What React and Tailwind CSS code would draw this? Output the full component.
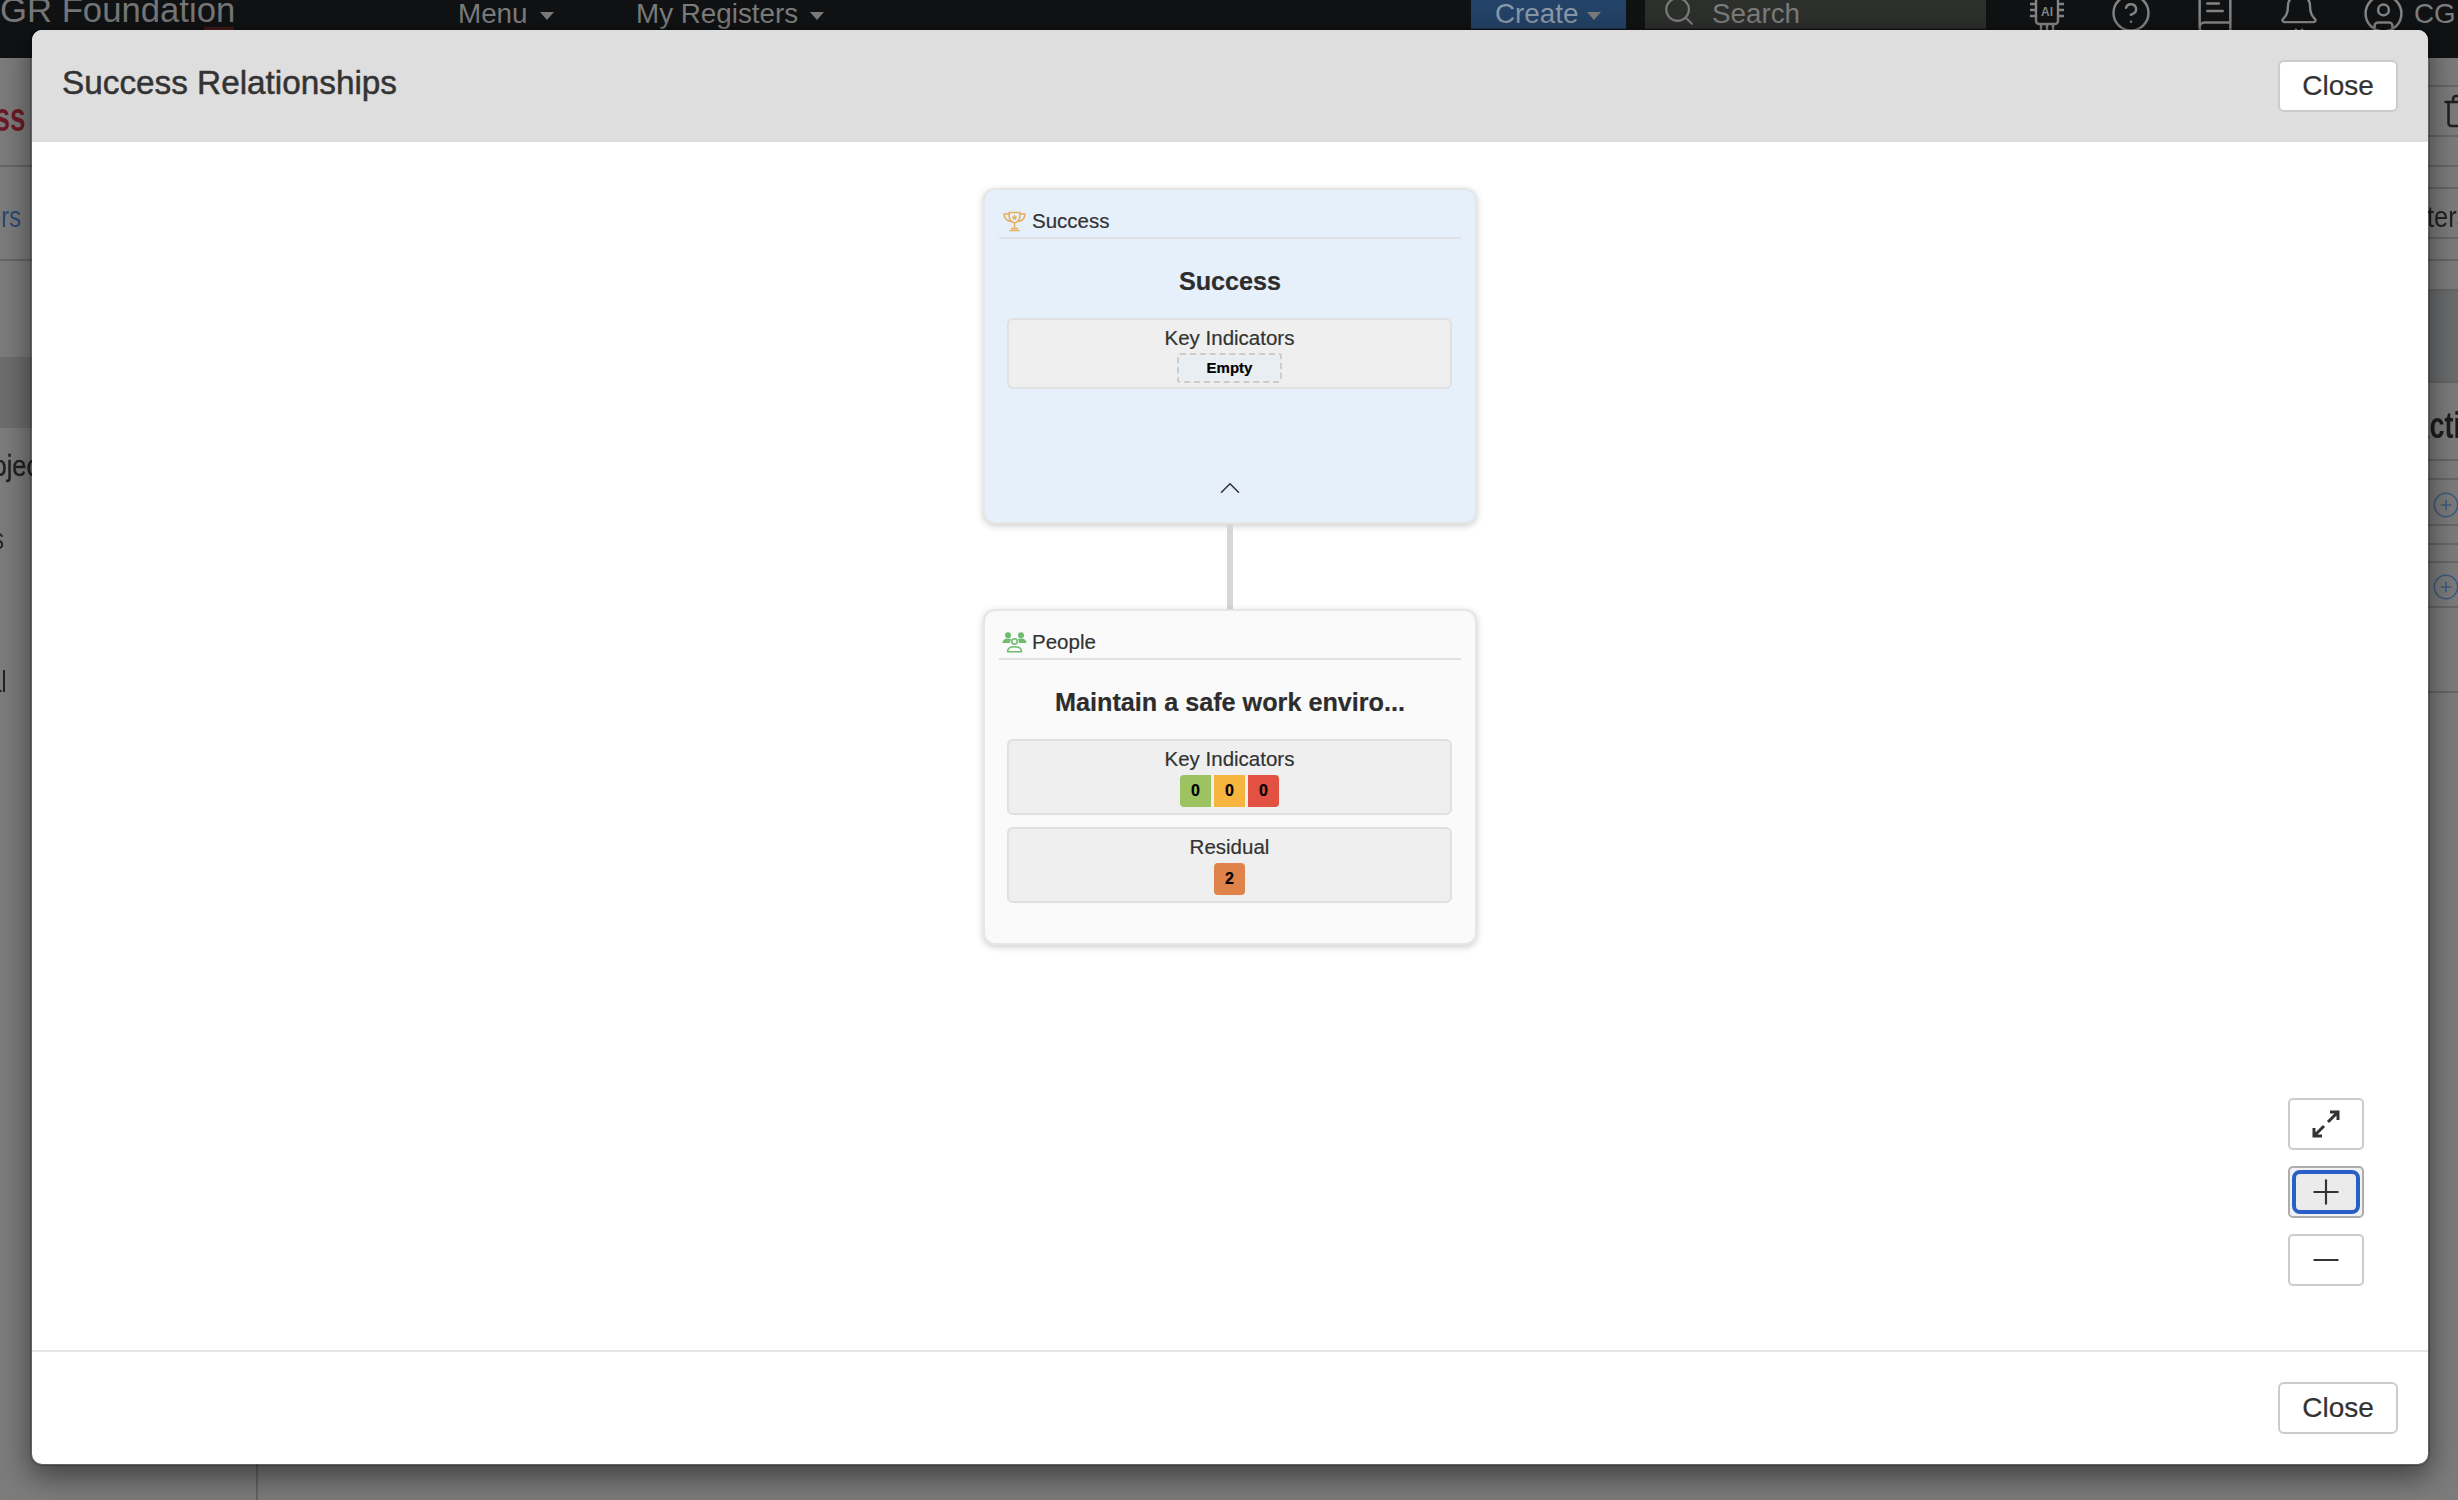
import React from 'react';
import { Search, CircleHelp, BookText, Bell, CircleUser, Trash, CirclePlus, ChevronUp, Plus, Minus } from 'lucide-react';

const leftRows = [
  { h: 'h-[109px]', text: 'Success', cls: 'text-[40px] font-bold text-[#6e1a26] -ml-[88px] mt-[10px] scale-x-70', line: true },
  { h: 'h-[94px]', text: 'Filters', cls: 'text-[30px] text-[#2b4a70] -ml-[44px] mt-[6px] scale-x-80', line: true },
  { h: 'h-[96px]' },
  { h: 'h-[71px] bg-[#6e6e6e]' },
  { h: 'h-[74px]', text: 'Projects', cls: 'text-[30px] text-[#222] -ml-[33px] scale-x-85 [-webkit-text-stroke:0.4px]' },
  { h: 'h-[56px]', text: 'Risks', cls: 'text-[30px] text-[#222] -ml-[51px] mt-[16px] scale-x-75' },
  { h: 'h-[86px]' },
  { h: 'h-[72px]', text: 'Residual', cls: 'text-[30px] text-[#222] -ml-[81px] mt-[3px] scale-x-75' },
];

const rightRows = [
  { h: 'h-[29px]' },
  { h: 'h-[50px]', trash: true },
  { h: 'h-[30px]' },
  { h: 'h-[22px]' },
  { h: 'h-[50px]', text: 'Filters', cls: 'text-[30px] text-[#222] mt-[6px] scale-x-85' },
  { h: 'h-[22px]' },
  { h: 'h-[30px]' },
  { h: 'h-[92px] bg-[#6a6c6e]' },
  { h: 'h-[78px]', text: 'Actions', cls: 'text-[36px] font-bold text-[#1c1c1c] ml-[10px] mt-[10px] scale-x-75' },
  { h: 'h-[19px]' },
  { h: 'h-[46px]', plus: true },
  { h: 'h-[19px]' },
  { h: 'h-[18px]' },
  { h: 'h-[45px]', plus: true },
  { h: 'h-[85px]' },
];

function Caret({ gap = 'ml-[12px]' }) {
  return <span className={`inline-block w-0 h-0 border-x-[7px] border-x-transparent border-t-[8px] border-t-[#7d7d7d] align-middle ${gap}`} />;
}

function TrophyIcon() {
  return (
    <svg width="23" height="21" viewBox="0 0 23 21" fill="none" stroke="#e9ad5b" strokeWidth="1.5" strokeLinejoin="round" strokeLinecap="round" className="mt-[2px]">
      <path d="M6 1.5h11c0 5 0 9-5.500 10.500C6 10.500 6 6.500 6 1.500z" />
      <path d="M6 3H1c0 4 2 6.500 6.500 7.500M17 3h5c0 4-2 6.500-6.500 7.500" />
      <path d="M11.500 12v5M7 19.500h9M8.500 17.500h6" />
      <path d="M11.500 4l.8 1.700 1.700.2-1.300 1.200.3 1.700-1.500-.9-1.500.9.300-1.700-1.300-1.200 1.700-.2z" fill="#e9ad5b" strokeWidth="0.5" />
    </svg>
  );
}

function PeopleIcon() {
  return (
    <svg width="25" height="21" viewBox="0 0 25 21" fill="none" className="-mx-[1px] mt-[2px]">
      <circle cx="6" cy="3.200" r="3" fill="#6fbb6f" />
      <circle cx="19" cy="3.200" r="3" fill="#6fbb6f" />
      <path d="M0.500 11c0-3 2-4.500 5.500-4.500 1.500 0 2.700.3 3.500.9-1 .9-1.500 2-1.500 3.600z" fill="#6fbb6f" />
      <path d="M24.500 11c0-3-2-4.500-5.500-4.500-1.500 0-2.700.3-3.500.9 1 .9 1.500 2 1.500 3.600z" fill="#6fbb6f" />
      <circle cx="12.500" cy="9.500" r="2.700" stroke="#6fbb6f" strokeWidth="1.500" />
      <path d="M5.500 19.800c0-3.500 3-5 7-5s7 1.500 7 5z" stroke="#6fbb6f" strokeWidth="1.500" strokeLinejoin="round" />
    </svg>
  );
}

function ChipIcon() {
  return (
    <svg width="36" height="36" viewBox="0 0 36 36" fill="none" stroke="#858585" strokeWidth="2.4" className="shrink-0">
      <rect x="7" y="3" width="22" height="26" rx="3" />
      <path d="M1 9h6M1 15h6M1 21h6M29 9h6M29 15h6M29 21h6M12 29v6M18 29v6M24 29v6" />
      <text x="18" y="21" textAnchor="middle" fontSize="12" fontWeight="700" fill="#858585" stroke="none" fontFamily="Liberation Sans">AI</text>
    </svg>
  );
}

function Panel({ label, children }) {
  return (
    <div className="ml-[8px] mr-[9px] h-full rounded-[6px] border-2 border-[#e0e0e0] bg-[#efefef] pt-[6px] flex flex-col items-center">
      <div className="text-[20.5px] leading-[24px] text-[#333]">{label}</div>
      {children}
    </div>
  );
}

function Pill({ value, cls }) {
  return <div className={`w-[31px] h-[32px] flex items-center justify-center text-[16px] font-bold text-black ${cls}`}>{value}</div>;
}

function NodeCard({ bg, icon, type, title, children }) {
  return (
    <div className={`w-[494px] h-[336px] shrink-0 rounded-[12px] border-2 border-[#e4e6e8] shadow-[0_2px_7px_rgba(0,0,0,0.2)] px-[14px] pt-[14px] flex flex-col ${bg}`}>
      <div className="h-[35px] shrink-0 border-b-2 border-[#dfe2e6] flex items-center pl-[4px] gap-[6px]">
        {icon}
        <span className="text-[20.5px] text-[#333] mt-[2px]">{type}</span>
      </div>
      <div className="h-[79px] shrink-0 pt-[6px] flex items-center justify-center text-[25.2px] font-bold text-[#2d2d2d]">{title}</div>
      {children}
    </div>
  );
}

function CloseButton() {
  return (
    <button className="w-[120px] h-[52px] rounded-[6px] border-2 border-[#ccc] bg-white text-[28px] text-[#333]">Close</button>
  );
}

export default function App() {
  return (
    <div className="relative h-screen overflow-hidden bg-[#7c7c7c] font-['Liberation_Sans',Arial,sans-serif]">
      {/* page behind the dialog */}
      <div className="h-[58px] bg-[#101214] flex items-start overflow-hidden text-[27.8px] leading-[28px] text-[#7d7d7d]">
        <div className="w-[458px] shrink-0 -mt-[7px]">
          <div className="text-[34.700px] leading-[34px] text-[#777] whitespace-nowrap">GR Foundation</div>
          <div className="ml-[204px] w-[30px] h-[3px] bg-[#4a1a1a]" />
        </div>
        <div className="w-[178px] shrink-0">Menu<Caret /></div>
        <div className="w-[835px] shrink-0">My Registers<Caret /></div>
        <div className="w-[155px] h-[29px] shrink-0 bg-[#244368] text-[#8a9aaa] pl-[24px] whitespace-nowrap">Create<Caret gap="ml-[9px]" /></div>
        <div className="ml-[19px] w-[341px] h-[29px] shrink-0 bg-[#2e302e] flex items-start pl-[17px] gap-[16px]">
          <Search size={34} strokeWidth={1.5} className="-mt-[6px] shrink-0" />
          <span>Search</span>
        </div>
        <div className="ml-[19px] flex items-center h-[26px] text-[#858585]">
          <div className="w-[84px] flex justify-center"><ChipIcon /></div>
          <div className="w-[84px] flex justify-center"><CircleHelp size={42} strokeWidth={1.4} className="shrink-0" /></div>
          <div className="w-[84px] flex justify-center"><BookText size={46} strokeWidth={1.3} className="shrink-0" /></div>
          <div className="w-[84px] flex justify-center"><Bell size={44} strokeWidth={1.3} className="shrink-0" /></div>
          <div className="w-[84px] flex justify-center"><CircleUser size={43} strokeWidth={1.4} className="shrink-0" /></div>
        </div>
        <div className="-ml-[11px]">CG</div>
      </div>

      <div className="flex h-[1442px]">
        <aside className="w-[258px] shrink-0 border-r-2 border-[#646464] overflow-hidden">
          {leftRows.map((row, i) => (
            <div key={i} className={`flex items-center whitespace-nowrap ${row.h} ${row.line ? 'border-b-2 border-[#666]' : ''}`}>
              {row.text && <span className={`origin-left blur-[0.4px] ${row.cls}`}>{row.text}</span>}
            </div>
          ))}
        </aside>
        <main className="flex-1 flex justify-end overflow-hidden">
          <div className="w-[58px] shrink-0">
            {rightRows.map((row, i) => (
              <div key={i} className={`flex items-center whitespace-nowrap overflow-hidden border-b-2 border-[#676767] ${row.h}`}>
                {row.text && <span className={`origin-left blur-[0.4px] ${row.cls}`}>{row.text}</span>}
                {row.trash && <Trash size={36} strokeWidth={1.700} className="ml-[41px] shrink-0 text-[#1f1f1f]" />}
                {row.plus && <CirclePlus size={28} strokeWidth={1.300} className="ml-[32px] mt-[5px] shrink-0 text-[#3d5a80]" />}
              </div>
            ))}
          </div>
        </main>
      </div>

      {/* dialog */}
      <div className="absolute left-[30px] top-[28px] w-[2400px] h-[1438px] flex flex-col rounded-[12px] border-2 border-black/20 bg-white bg-clip-padding shadow-[0_10px_30px_rgba(0,0,0,0.5)] [-webkit-text-stroke:0.2px]">
        <div className="h-[112px] shrink-0 rounded-t-[10px] bg-[#dedede] flex justify-between items-start pl-[30px] pr-[30px] pt-[30px]">
          <h4 className="text-[33.300px] leading-[46px] text-[#333] [-webkit-text-stroke:0.5px_#333]">Success Relationships</h4>
          <CloseButton />
        </div>

        <div className="relative flex-1 flex flex-col items-center pt-[46px]">
          <NodeCard bg="bg-[#e6f0fb]" icon={<TrophyIcon />} type="Success" title="Success">
            <div className="h-[71px] shrink-0">
              <Panel label="Key Indicators">
                <div className="mt-[3px] w-[105px] h-[30px] rounded-[3px] border-2 border-dashed border-[#ccc] bg-[#e9eef2] flex items-center justify-center text-[15px] font-bold text-black">Empty</div>
              </Panel>
            </div>
            <ChevronUp size={34} strokeWidth={1.100} className="mt-auto mb-[17px] self-center text-[#333]" />
          </NodeCard>
          <div className="w-[6px] h-[85px] shrink-0 bg-[#d6d6d6]" />
          <NodeCard bg="bg-[#fafafa]" icon={<PeopleIcon />} type="People" title="Maintain a safe work enviro...">
            <div className="h-[76px] shrink-0">
              <Panel label="Key Indicators">
                <div className="mt-[4px] flex gap-[3px]">
                  <Pill value="0" cls="bg-[#9cc35f] rounded-l-[4px]" />
                  <Pill value="0" cls="bg-[#f5b53f]" />
                  <Pill value="0" cls="bg-[#e25141] rounded-r-[4px]" />
                </div>
              </Panel>
            </div>
            <div className="mt-[12px] h-[76px] shrink-0">
              <Panel label="Residual">
                <div className="mt-[4px]">
                  <Pill value="2" cls="bg-[#e0834a] rounded-[4px]" />
                </div>
              </Panel>
            </div>
          </NodeCard>

          <div className="absolute right-[64px] bottom-[64px] flex flex-col gap-[16px]">
            <button className="w-[76px] h-[52px] rounded-[5px] border-2 border-[#ccc] bg-white flex items-center justify-center">
              <svg width="28" height="28" viewBox="0 0 28 28" fill="none" stroke="#333" strokeWidth="3">
                <path d="M18 2h8v8M26 2L16 12M2 18v8h8M2 26l10-10" />
              </svg>
            </button>
            <button className="w-[76px] h-[52px] rounded-[5px] border-2 border-[#adadad] bg-[#f2f2f2] p-[2px]">
              <span className="w-full h-full rounded-[8px] border-4 border-[#2860c8] bg-[#ebebeb] flex items-center justify-center">
                <Plus size={40} strokeWidth={1.300} className="text-[#333]" />
              </span>
            </button>
            <button className="w-[76px] h-[52px] rounded-[5px] border-2 border-[#ccc] bg-white flex items-center justify-center">
              <Minus size={40} strokeWidth={1.300} className="text-[#333]" />
            </button>
          </div>
        </div>

        <div className="h-[114px] shrink-0 border-t-2 border-[#e5e5e5] flex justify-end items-start pr-[30px] pt-[30px]">
          <CloseButton />
        </div>
      </div>
    </div>
  );
}
